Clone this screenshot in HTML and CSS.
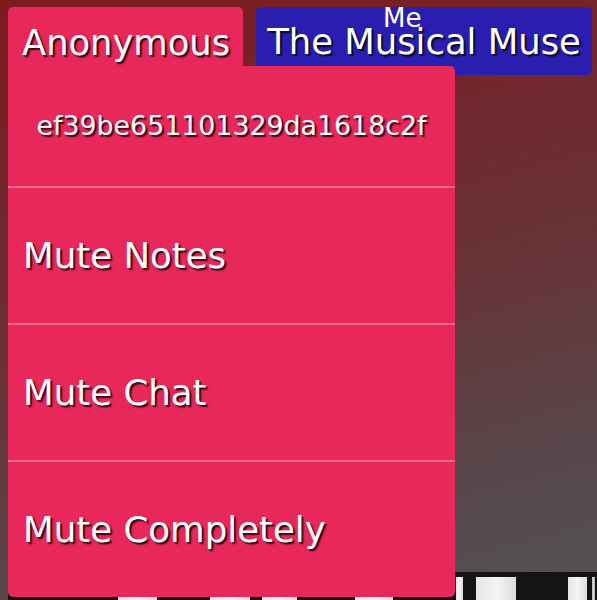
FILE: index.html
```html
<!DOCTYPE html>
<html lang="en">
<head>
<meta charset="utf-8">
<title>Participants</title>
<link rel="stylesheet" href="styles.css">
</head>
<body>
  <div class="names">
    <div class="name-tab anon">
      <span class="name-text">Anonymous</span>
      <div class="participant-menu">
        <div class="menu-item menu-id">ef39be651101329da1618c2f</div>
        <div class="menu-item">Mute Notes</div>
        <div class="menu-item">Mute Chat</div>
        <div class="menu-item">Mute Completely</div>
      </div>
    </div>
    <div class="name-tab me">
      <span class="me-badge">Me</span>
      <span class="name-text">The Musical Muse</span>
    </div>
  </div>

  <div class="piano">
    <span class="gap"></span><span class="white"></span>
    <span class="gap"></span><span class="white"></span>
    <span class="gap"></span><span class="white"></span>
    <span class="gap"></span><span class="white"></span>
    <span class="gap"></span><span class="white"></span>
    <span class="gap"></span><span class="white"></span>
    <span class="gap"></span><span class="white"></span>
    <span class="gap"></span><span class="white grey"></span>
    <span class="gap"></span>
  </div>
</body>
</html>
```

FILE: styles.css
```css
html, body {
  margin: 0;
  height: 100%;
}

body {
  display: flex;
  flex-direction: column;
  overflow: hidden;
  font-family: "DejaVu Sans", Verdana, sans-serif;
  color: #fff;
  background: linear-gradient(165deg, #7e1a1f 0%, #72252b 25%, #663539 55%, #57474b 80%, #535255 100%);
}

.names {
  display: flex;
  align-items: flex-start;
  gap: 13px;
  padding: 7px 0 0 8px;
}

.name-tab {
  position: relative;
  box-sizing: border-box;
  text-shadow: 2px 2px 1.5px rgba(0, 0, 0, 0.8);
  white-space: nowrap;
}

.anon {
  width: 235px;
  height: 59px;
  padding: 16px 0 0 14px;
  background: #e8275a;
  border-radius: 5px 5px 0 0;
  font-size: 35.3px;
  line-height: 40px;
  z-index: 2;
}

.me {
  width: 336px;
  height: 68px;
  padding-top: 15px;
  background: #2a1eb0;
  border-radius: 5px;
  font-size: 35.4px;
  line-height: 40px;
  text-align: center;
  z-index: 1;
}

.me-badge {
  position: absolute;
  top: -2px;
  left: 127px;
  font-size: 26px;
  line-height: 26px;
  text-shadow: none;
}

/* dropdown hanging from the selected name */
.participant-menu {
  position: absolute;
  top: 100%;
  left: 0;
  width: 447px;
  height: 531px;
  background: #e8275a;
  border-radius: 0 5px 5px 5px;
  display: flex;
  flex-direction: column;
  font-size: 35.6px;
}

.menu-item {
  display: flex;
  align-items: center;
  height: 136px;
  padding-left: 15px;
  border-top: 2px solid #ef6a8c;
}

.menu-id {
  height: 121px;
  border-top: none;
  justify-content: center;
  padding-left: 0;
  font-size: 26.8px;
}

/* keyboard along the bottom edge */
.piano {
  margin-top: auto;
  margin-left: 8px;
  height: 28px;
  box-sizing: border-box;
  padding-top: 5px;
  background: #141414;
  display: grid;
  grid-template-columns: 110px 39px 53px 40px 12px 35px 58px 38px 63px 7px 13px 40px 52px 19px 5px 3px 2px;
}

.piano .white {
  background: linear-gradient(90deg, #e6e6e6, #f4f4f4 50%, #dcdcdc);
}

.piano .grey {
  background: linear-gradient(90deg, #bdbdbd, #d8d8d8 50%, #a8a8a8);
}
```
